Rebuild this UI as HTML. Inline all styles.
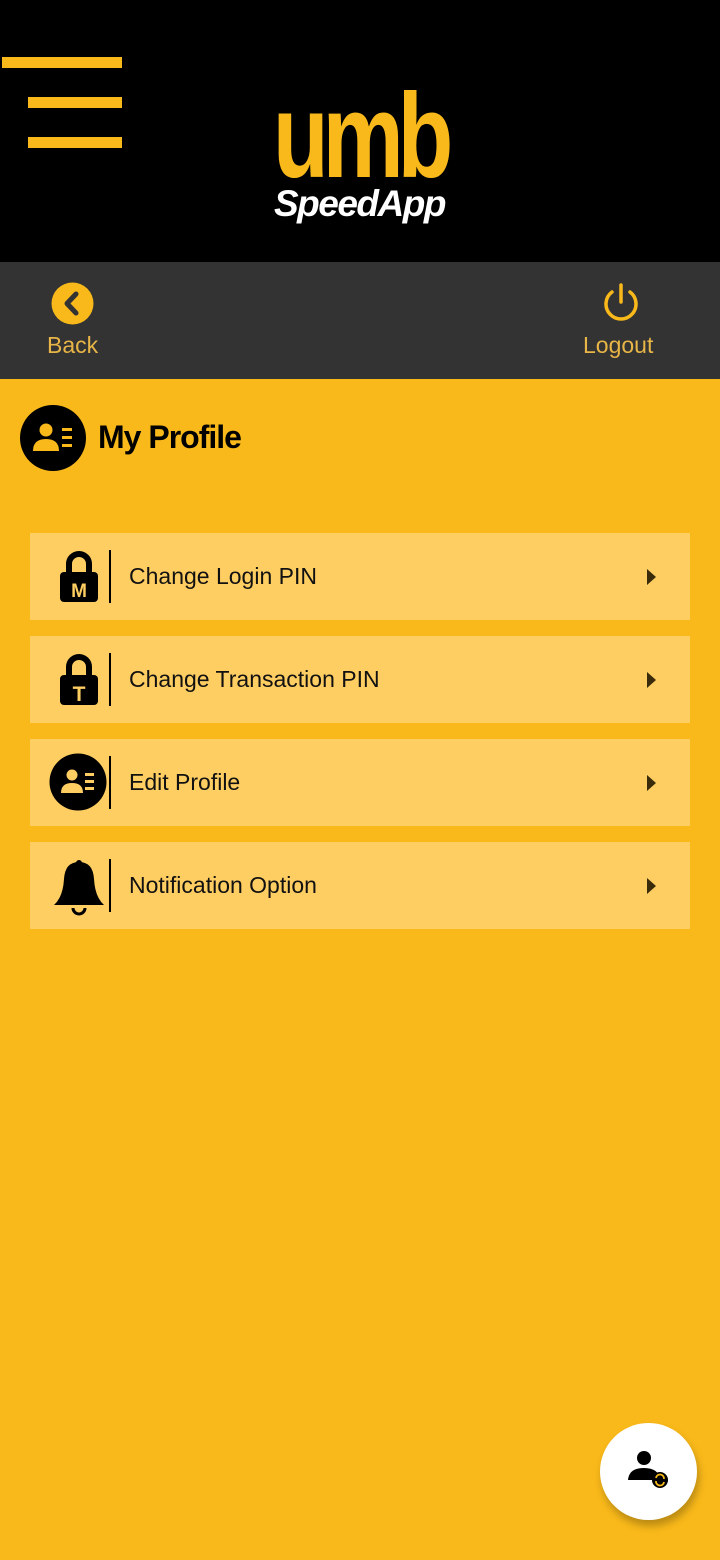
<!DOCTYPE html>
<html><head><meta charset="utf-8"><style>
*{margin:0;padding:0;box-sizing:border-box}
body{width:720px;height:1560px;background:#F9B91A;font-family:"Liberation Sans",sans-serif;position:relative;overflow:hidden}
.top{position:absolute;left:0;top:0;width:720px;height:262px;background:#000}
.bar{position:absolute;background:#F9B91A;height:11px}
.nav{position:absolute;left:0;top:262px;width:720px;height:117px;background:#333}
.card{position:absolute;left:30px;width:660px;height:87px;background:#FFCE62}
.card .div{position:absolute;left:79px;top:17px;width:2px;height:53px;background:#000}
.card .t{position:absolute;left:99px;top:0;line-height:87px;font-size:23px;color:#111}
.card .arr{position:absolute;left:617px;top:36px;width:0;height:0;border-left:9px solid #3a2c0a;border-top:8px solid transparent;border-bottom:8px solid transparent}
.card svg{position:absolute;left:19px;top:15px}
</style></head><body>
<div class="top">
<div class="bar" style="left:2px;top:57px;width:120px"></div>
<div class="bar" style="left:28px;top:97px;width:94px"></div>
<div class="bar" style="left:28px;top:137px;width:94px"></div>
<div style="position:absolute;left:273px;top:76px;font-size:120px;font-weight:bold;color:#F9B91A;letter-spacing:-8px;line-height:120px;transform:scaleX(0.76);transform-origin:left">umb</div>
<div style="position:absolute;left:274px;top:182px;font-size:37px;font-weight:bold;font-style:italic;color:#fff;line-height:44px;letter-spacing:-1.5px">SpeedApp</div>
</div>
<div class="nav">
<svg style="position:absolute;left:51px;top:20px" width="43" height="43" viewBox="0 0 43 43"><circle cx="21.5" cy="21.5" r="21" fill="#F9B91A"/><path d="M25 12 L16 21.5 L25 31" stroke="#333" stroke-width="5" fill="none" stroke-linecap="round" stroke-linejoin="round"/></svg>
<div style="position:absolute;left:47px;top:70px;font-size:23px;color:#E8B547">Back</div>
<svg style="position:absolute;left:601px;top:20px" width="40" height="44" viewBox="0 0 40 44"><path d="M11 10 A15 15 0 1 0 29 10" stroke="#F9B91A" stroke-width="3.5" fill="none" stroke-linecap="round"/><line x1="20" y1="3" x2="20" y2="20" stroke="#F9B91A" stroke-width="3.5" stroke-linecap="round"/></svg>
<div style="position:absolute;left:583px;top:70px;font-size:23px;color:#E8B547">Logout</div>
</div>
<svg style="position:absolute;left:20px;top:404px" width="67" height="68" viewBox="0 0 67 68"><circle cx="33" cy="34" r="33" fill="#000"/><circle cx="26" cy="26" r="6.5" fill="#F9B91A"/><path d="M13 47 Q13 35 26 35 Q39 35 39 47 Z" fill="#F9B91A"/><rect x="42" y="24" width="10" height="3" fill="#F9B91A"/><rect x="42" y="32" width="10" height="3" fill="#F9B91A"/><rect x="42" y="40" width="10" height="3" fill="#F9B91A"/></svg>
<div style="position:absolute;left:98px;top:419px;font-size:32px;font-weight:bold;color:#000;letter-spacing:-1px">My Profile</div>

<div class="card" style="top:533px">
<svg width="60" height="60" viewBox="0 0 60 60"><path d="M20 24 V16 A10 10 0 0 1 40 16 V24" stroke="#000" stroke-width="6" fill="none"/><rect x="11" y="24" width="38" height="30" rx="4" fill="#000"/><text x="30" y="49" font-size="19" font-weight="bold" fill="#FFCE62" text-anchor="middle" font-family="Liberation Sans">M</text></svg>
<div class="div"></div><div class="t">Change Login PIN</div><div class="arr"></div></div>
<div class="card" style="top:636px">
<svg width="60" height="60" viewBox="0 0 60 60"><path d="M20 24 V16 A10 10 0 0 1 40 16 V24" stroke="#000" stroke-width="6" fill="none"/><rect x="11" y="24" width="38" height="30" rx="4" fill="#000"/><text x="30" y="50" font-size="21" font-weight="bold" fill="#FFCE62" text-anchor="middle" font-family="Liberation Sans">T</text></svg>
<div class="div"></div><div class="t">Change Transaction PIN</div><div class="arr"></div></div>
<div class="card" style="top:739px">
<svg width="60" height="60" viewBox="0 0 60 60" style="top:13px"><circle cx="29" cy="30" r="28.5" fill="#000"/><circle cx="23" cy="23" r="5.5" fill="#FFCE62"/><path d="M12 41 Q12 31 23 31 Q34 31 34 41 Z" fill="#FFCE62"/><rect x="36" y="21" width="9" height="3" fill="#FFCE62"/><rect x="36" y="28" width="9" height="3" fill="#FFCE62"/><rect x="36" y="35" width="9" height="3" fill="#FFCE62"/></svg>
<div class="div"></div><div class="t">Edit Profile</div><div class="arr"></div></div>
<div class="card" style="top:842px">
<svg width="60" height="60" viewBox="0 0 60 60"><circle cx="30" cy="6" r="3" fill="#000"/><path d="M30 5 Q16 5 15 22 Q14 40 5 48 H55 Q46 40 45 22 Q44 5 30 5 Z" fill="#000"/><path d="M24 51 A6 6 0 0 0 36 51" stroke="#000" stroke-width="3" fill="none"/></svg>
<div class="div"></div><div class="t">Notification Option</div><div class="arr"></div></div>

<div style="position:absolute;left:600px;top:1423px;width:97px;height:97px;border-radius:50%;background:#fff;box-shadow:2px 6px 8px rgba(0,0,0,0.25)"></div>
<svg style="position:absolute;left:626px;top:1449px" width="46" height="42" viewBox="0 0 46 42"><circle cx="18" cy="9" r="7" fill="#000"/><path d="M2 31 Q3 19 18 19 Q33 19 34 31 Z" fill="#000"/><circle cx="34" cy="31" r="8" fill="#000"/><path d="M30 29 A4 4 0 0 1 38 30 M38 33 A4 4 0 0 1 30 32" stroke="#F9B91A" stroke-width="1.8" fill="none"/></svg>
</body></html>
